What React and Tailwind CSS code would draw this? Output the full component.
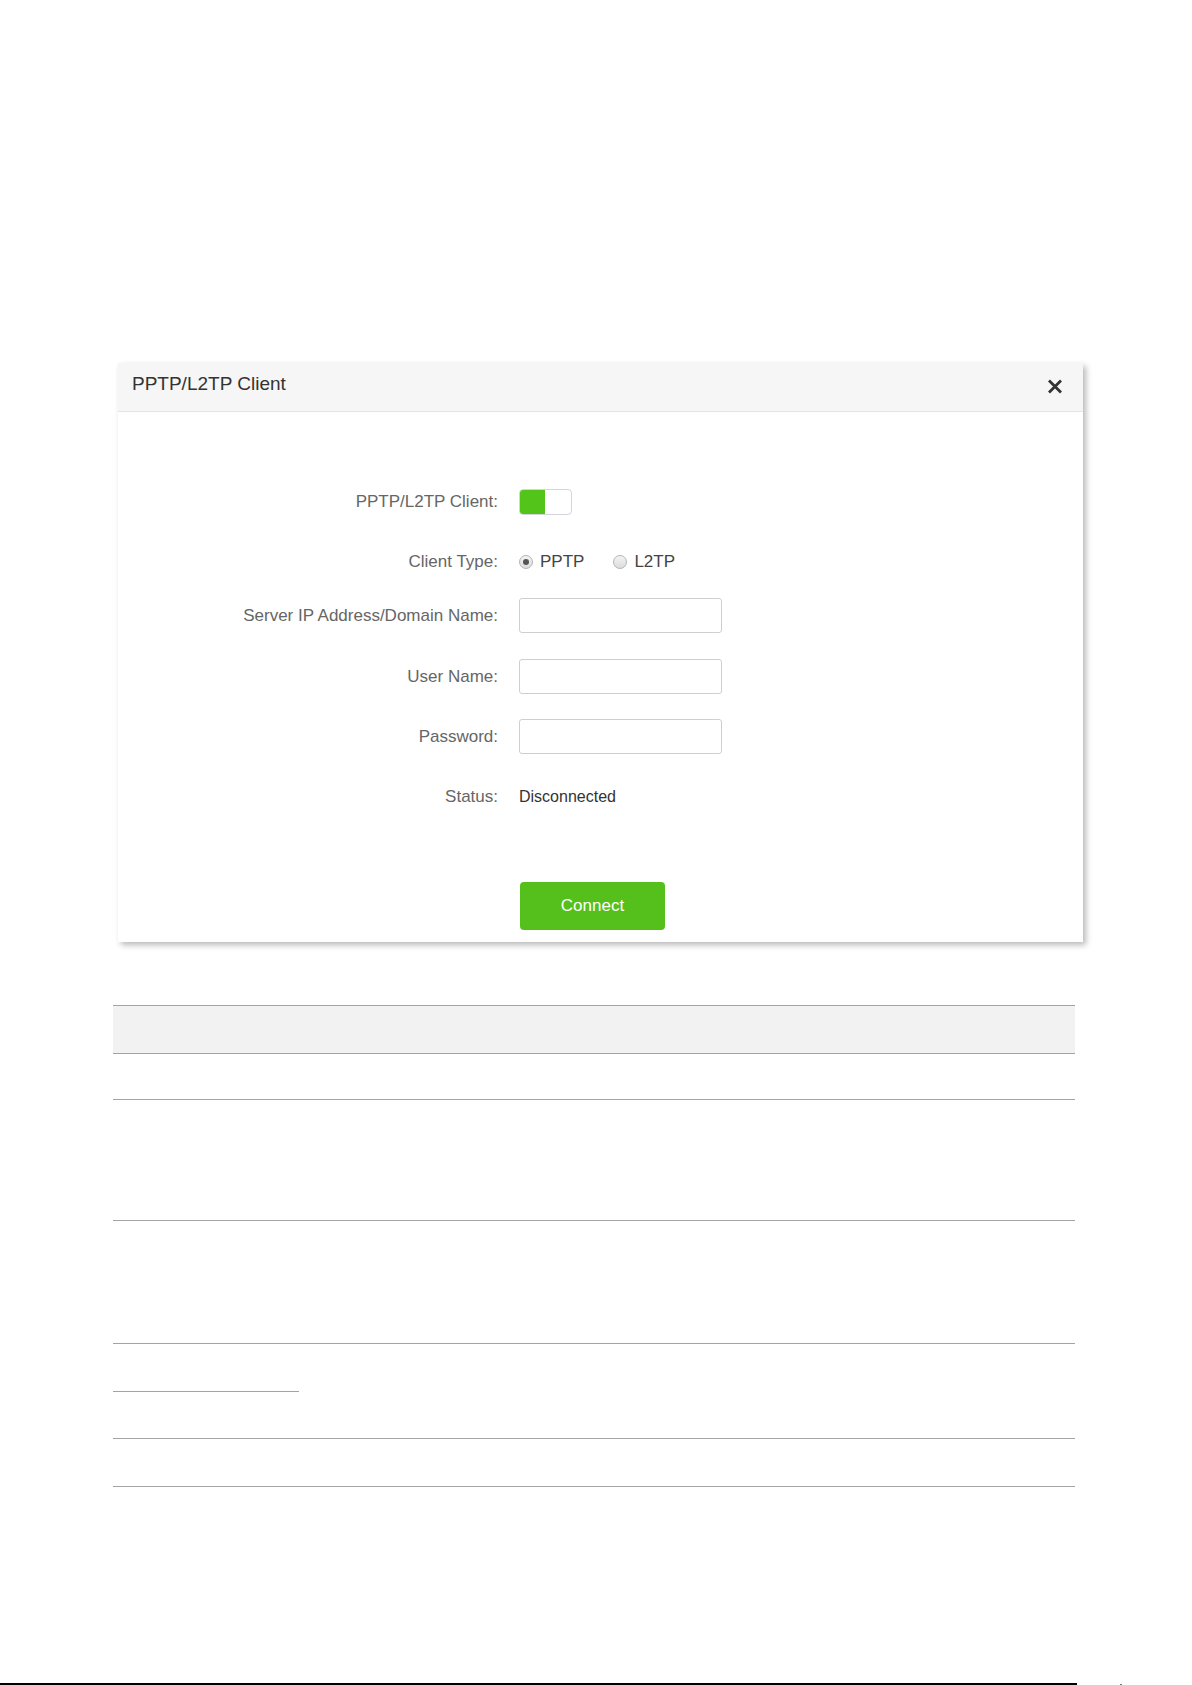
import { useState } from "react";

const FONT = { fontFamily: '"Liberation Sans", Arial, sans-serif' };

const FormRow = ({ label, children, className = "" }) => (
  <div className={`flex h-[35px] items-center ${className}`}>
    <div className="w-[380px] text-right text-[17px] text-[#666]">{label}</div>
    <div className="ml-[21px] flex items-center">{children}</div>
  </div>
);

const Radio = ({ checked, label, onClick }) => (
  <label className="flex cursor-pointer items-center" onClick={onClick}>
    <span className="flex h-[14px] w-[14px] items-center justify-center rounded-full border border-[#b5b5b5] bg-gradient-to-b from-[#f4f4f4] to-[#dcdcdc]">
      {checked && <span className="h-[6px] w-[6px] rounded-full bg-[#555]" />}
    </span>
    <span className="ml-[7px] text-[17px] text-[#444]">{label}</span>
  </label>
);

const TextInput = () => (
  <input
    type="text"
    className="h-[35px] w-[203px] rounded-[3px] border border-[#cfcfcf] bg-white px-2 text-[15px] outline-none"
  />
);

const ClientDialog = () => {
  const [enabled, setEnabled] = useState(true);
  const [type, setType] = useState("pptp");

  return (
    <section className="ml-[118px] w-[965px] bg-white shadow-[3px_3px_6px_rgba(0,0,0,0.28)]">
      {/* Header */}
      <div className="flex h-[49px] items-start justify-between border-b border-[#e4e4e4] bg-[#f6f6f6]">
        <h3 className="pl-[14px] pt-[9px] text-[19px] leading-[24px] text-[#333]">
          PPTP/L2TP Client
        </h3>
        <button className="mr-[20px] mt-[16px]">
          <svg width="16" height="15" viewBox="0 0 16 15">
            <path
              d="M2 1.5 L14 13.5 M14 1.5 L2 13.5"
              stroke="#333"
              strokeWidth="2.8"
              strokeLinecap="butt"
            />
          </svg>
        </button>
      </div>

      {/* Form */}
      <div className="pb-[12px] pt-[72px]">
        <FormRow label="PPTP/L2TP Client:">
          <button
            onClick={() => setEnabled(!enabled)}
            className="flex h-[26px] w-[53px] overflow-hidden rounded-[4px] border border-[#d2d6dc] bg-white p-0"
          >
            {enabled && <span className="h-full w-[25px] bg-[#52c41a]" />}
          </button>
        </FormRow>

        <FormRow label="Client Type:" className="mt-[25px]">
          <Radio checked={type === "pptp"} label="PPTP" onClick={() => setType("pptp")} />
          <div className="ml-[29px]">
            <Radio checked={type === "l2tp"} label="L2TP" onClick={() => setType("l2tp")} />
          </div>
        </FormRow>

        <FormRow label="Server IP Address/Domain Name:" className="mt-[19px]">
          <TextInput />
        </FormRow>

        <FormRow label="User Name:" className="mt-[26px]">
          <TextInput />
        </FormRow>

        <FormRow label="Password:" className="mt-[25px]">
          <TextInput />
        </FormRow>

        <FormRow label="Status:" className="mt-[25px]">
          <span className="text-[16px] text-[#333]">Disconnected</span>
        </FormRow>

        <div className="ml-[402px] mt-[68px]">
          <button className="h-[48px] w-[145px] rounded-[4px] bg-[#55c01b] text-[17px] text-white">
            Connect
          </button>
        </div>
      </div>
    </section>
  );
};

const Rule = () => <div className="h-px bg-[#a3a3a3]" />;

const ParamTable = () => (
  <div className="ml-[113px] mt-[63px] w-[962px]">
    <Rule />
    <div className="h-[47px] bg-[#f2f2f2]" />
    <Rule />
    <div className="h-[45px]" />
    <Rule />
    <div className="h-[120px]" />
    <Rule />
    <div className="h-[122px]" />
    <Rule />
    <div className="h-[47px]" />
    <div className="h-px w-[186px] bg-[#a3a3a3]" />
    <div className="h-[46px]" />
    <Rule />
    <div className="h-[47px]" />
    <Rule />
  </div>
);

export default function App() {
  return (
    <div style={FONT} className="flex h-[1685px] w-[1192px] flex-col bg-white pt-[363px]">
      <ClientDialog />
      <ParamTable />
      <div className="flex-1" />
      {/* page footer rule */}
      <div className="flex h-[2px] items-end">
        <div className="h-[2px] w-[1077px] bg-black" />
        <div className="ml-[43px] h-px w-[2px] bg-[#777]" />
      </div>
    </div>
  );
}
